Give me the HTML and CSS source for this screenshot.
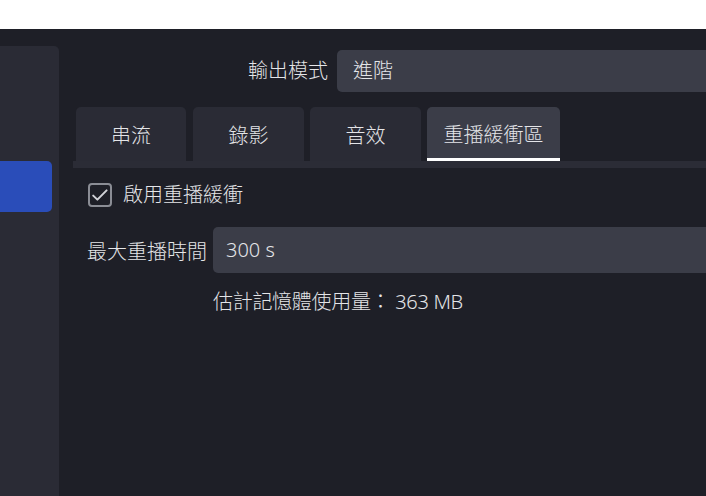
FILE: index.html
```html
<!DOCTYPE html>
<html lang="zh-Hant">
<head>
<meta charset="utf-8">
<title>設定</title>
<link rel="stylesheet" href="styles.css">
</head>
<body>
<div class="topbar"></div>
<div class="app">
  <aside class="sidebar">
    <div class="side-item active"></div>
  </aside>
  <main class="main">
    <div class="mode-row">
      <label class="mode-label">輸出模式</label>
      <div class="select">進階</div>
    </div>
    <div class="tabs">
      <div class="tab">串流</div>
      <div class="tab">錄影</div>
      <div class="tab">音效</div>
      <div class="tab selected">重播緩衝區</div>
    </div>
    <div class="tab-strip"></div>
    <section class="panel">
      <div class="check-row">
        <span class="checkbox">
          <svg width="20" height="20" viewBox="0 0 20 20"><path d="M3.2 10.6 L7.4 14.6 L16.6 5.4" fill="none" stroke="#d2d3d8" stroke-width="2" stroke-linecap="round" stroke-linejoin="round"/></svg>
        </span>
        <span class="check-text">啟用重播緩衝</span>
      </div>
      <div class="field-row">
        <span class="field-label">最大重播時間</span>
        <div class="spin">300 s</div>
      </div>
      <div class="estimate">估計記憶體使用量： 363 MB</div>
    </section>
  </main>
</div>
</body>
</html>
```
FILE: styles.css
```css
html, body {
  margin: 0;
  padding: 0;
  overflow: hidden;
  background: #1e1f27;
  width: 706px;
  height: 496px;
}
body {
  font-family: "Noto Sans", "Noto Sans CJK TC", sans-serif;
  font-size: 20px;
  font-weight: 300;
  color: #e4e5e8;
}
.topbar {
  height: 29px;
  background: #ffffff;
}
.app {
  display: flex;
  width: 1000px;
  height: 467px;
}
.sidebar {
  width: 59px;
  margin-top: 17px;
  background: #2a2b35;
  border-top-right-radius: 5px;
  padding-top: 115px;
  box-sizing: border-box;
}
.side-item.active {
  width: 52px;
  height: 51px;
  background: #2a4db9;
  border-radius: 0 5px 5px 0;
}
.main {
  flex: 1;
  display: flex;
  flex-direction: column;
}
.mode-row {
  display: flex;
  align-items: center;
  margin-top: 21px;
  padding-left: 189px;
  gap: 9px;
}
.mode-label {
  width: 80px;
  text-align: right;
  line-height: 24px;
}
.select {
  flex: 1;
  height: 42px;
  line-height: 42px;
  background: #3b3d48;
  border-radius: 5px;
  padding-left: 16px;
}
.tabs {
  display: flex;
  margin-top: 15px;
  margin-left: 14px;
  padding-left: 3px;
  gap: 6px;
}
.tab {
  min-width: 111px;
  height: 54px;
  box-sizing: border-box;
  padding: 0 16px;
  display: flex;
  align-items: center;
  justify-content: center;
  background: #2a2b35;
  border-radius: 5px 5px 0 0;
}
.tab:first-child {
  min-width: 110px;
  margin-right: 1px;
}
.tab.selected {
  min-width: 133px;
  background: #3b3d48;
  border-bottom: 3px solid #ffffff;
  padding-top: 1px;
}
.tab-strip {
  height: 7px;
  margin-left: 14px;
  background: #2b2c36;
}
.panel {
  padding-left: 28px;
  padding-top: 15px;
}
.check-row {
  display: flex;
  align-items: center;
  gap: 11px;
  padding-left: 1px;
}
.checkbox {
  width: 24px;
  height: 24px;
  box-sizing: border-box;
  border: 2px solid #8b8d95;
  border-radius: 4px;
  display: flex;
  align-items: center;
  justify-content: center;
}
.check-text {
  line-height: 24px;
}
.field-row {
  display: flex;
  align-items: center;
  margin-top: 20px;
}
.field-label {
  width: 126px;
  flex: none;
}
.spin {
  flex: 1;
  height: 46px;
  line-height: 46px;
  background: #3b3d48;
  border-radius: 5px;
  padding-left: 13px;
}
.estimate {
  margin-top: 17px;
  margin-left: 126px;
  line-height: 24px;
  letter-spacing: -0.3px;
}
```
